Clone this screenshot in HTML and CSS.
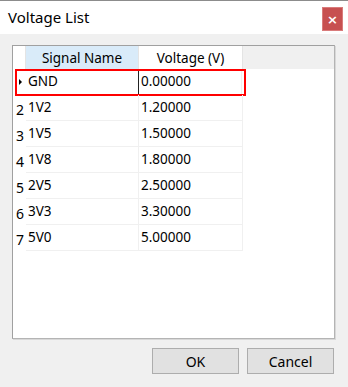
FILE: index.html
```html
<!DOCTYPE html>
<html lang="en">
<head>
  <meta charset="UTF-8" />
  <title>Voltage List</title>
  <link rel="stylesheet" href="styles.css">
</head>
<body>
  <div class="dialog">
    <header class="titlebar">
      <span class="title">Voltage List</span>
      <button class="close-btn">&#215;</button>
    </header>

    <div class="content">
      <div class="grid">
        <div class="grid-head">
          <div class="row-head"></div>
          <div class="col-head col-name active">Signal Name</div>
          <div class="col-head col-volt">Voltage (V)</div>
        </div>

        <div class="grid-row current">
          <div class="row-head"><span class="marker"></span></div>
          <div class="cell col-name">GND</div>
          <div class="cell col-volt focus">0.00000</div>
          <div class="selection"></div>
        </div>
        <div class="grid-row">
          <div class="row-head">2</div>
          <div class="cell col-name">1V2</div>
          <div class="cell col-volt">1.20000</div>
        </div>
        <div class="grid-row">
          <div class="row-head">3</div>
          <div class="cell col-name">1V5</div>
          <div class="cell col-volt">1.50000</div>
        </div>
        <div class="grid-row">
          <div class="row-head">4</div>
          <div class="cell col-name">1V8</div>
          <div class="cell col-volt">1.80000</div>
        </div>
        <div class="grid-row">
          <div class="row-head">5</div>
          <div class="cell col-name">2V5</div>
          <div class="cell col-volt">2.50000</div>
        </div>
        <div class="grid-row">
          <div class="row-head">6</div>
          <div class="cell col-name">3V3</div>
          <div class="cell col-volt">3.30000</div>
        </div>
        <div class="grid-row">
          <div class="row-head">7</div>
          <div class="cell col-name">5V0</div>
          <div class="cell col-volt">5.00000</div>
        </div>
      </div>

      <div class="buttons">
        <button class="btn">OK</button>
        <button class="btn">Cancel</button>
      </div>
    </div>
  </div>
</body>
</html>
```

FILE: styles.css
```css
* {
  box-sizing: border-box;
}

body {
  margin: 0;
  font-family: "Noto Sans", "Open Sans", sans-serif;
  color: #000;
  background: #f0f0f0;
}

.dialog {
  width: 348px;
  height: 387px;
  background: #f0f0f0;
}

.titlebar {
  height: 34px;
  background: #fff;
  border-top: 1px solid #8c8c8c;
  display: flex;
  align-items: center;
  justify-content: space-between;
  padding: 0 5px 0 8px;
}

.title {
  font-size: 15px;
  margin-top: -1px;
}

.close-btn {
  width: 21px;
  height: 24px;
  background: #c75050;
  border: 1px solid #d97b7b;
  color: #fff;
  font-size: 13px;
  font-weight: bold;
  line-height: 1;
  padding: 0;
  margin-top: 3px;
  font-family: "DejaVu Sans", sans-serif;
}

.content {
  padding: 11px 13px 0 12px;
}

/* tabela */
.grid {
  position: relative;
  height: 294px;
  background: #fff;
  border: 1px solid #a0a0a0;
  border-right-color: #b4b4b4;
  border-bottom-color: #b4b4b4;
  box-shadow: 1px 1px 0 #d8d8d8;
  font-size: 13.5px;
}

.grid-head {
  display: flex;
  height: 23px;
  background: #f0f0f0;
}

.grid-head .row-head {
  background: #fff;
  border-right: 1px solid #e4e4e4;
}

.col-head {
  display: flex;
  align-items: center;
  justify-content: center;
  background: #fff;
  border-right: 1px solid #e4e4e4;
  padding-top: 1px;
}

.col-head.active {
  background: #d9ebf9;
}

.row-head {
  width: 13px;
  flex-shrink: 0;
  display: flex;
  align-items: flex-end;
  justify-content: center;
  padding: 0 0 4px 1px;
}

.col-name {
  width: 113px;
}

.col-volt {
  width: 104px;
}

.grid-row {
  position: relative;
  display: flex;
  height: 26px;
}

.grid-row .row-head {
  font-size: 14px;
  line-height: 1;
}

.cell {
  display: flex;
  align-items: center;
  padding: 0 0 1px 2px;
  border-right: 1px solid #f0f0f0;
  border-bottom: 1px solid #f0f0f0;
}

.cell.focus {
  border-left: 1px solid #222;
  margin-left: -1px;
}

.current .row-head {
  align-items: center;
  justify-content: flex-start;
  padding: 0 0 0 6px;
}

.marker {
  width: 0;
  height: 0;
  border-top: 3px solid transparent;
  border-bottom: 3px solid transparent;
  border-left: 3px solid #000;
}

.selection {
  position: absolute;
  left: 2px;
  top: 0;
  width: 231px;
  height: 27px;
  border: 2px solid #f00;
  pointer-events: none;
}

.buttons {
  display: flex;
  justify-content: flex-end;
  gap: 8px;
  margin-top: 9px;
  padding-right: 1px;
}

.btn {
  width: 87px;
  height: 26px;
  background: #e1e1e1;
  border: 1px solid #adadad;
  font-family: "Noto Sans", "Open Sans", sans-serif;
  font-size: 14px;
  color: #000;
  padding: 0;
}
```
